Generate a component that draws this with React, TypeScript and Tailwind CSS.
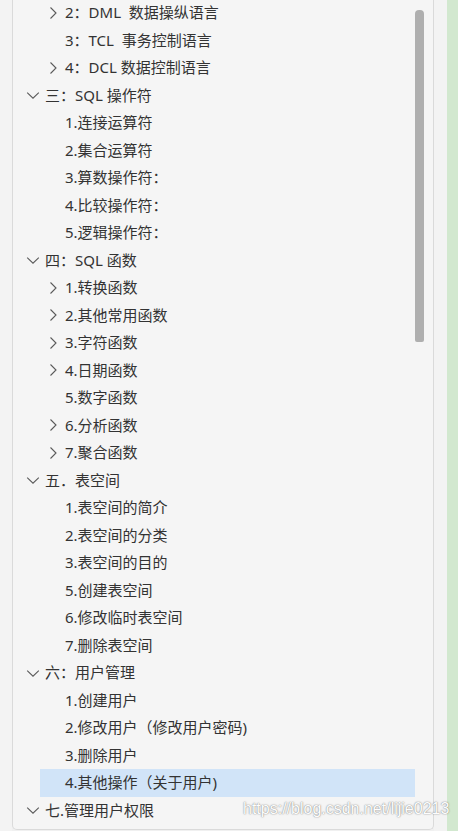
import React from "react";

type Row = { level: 0 | 1; text: string; chevron?: "right" | "down"; selected?: boolean };

const rows: Row[] = [
  { level: 1, text: "2：DML  数据操纵语言", chevron: "right" },
  { level: 1, text: "3：TCL  事务控制语言" },
  { level: 1, text: "4：DCL 数据控制语言", chevron: "right" },
  { level: 0, text: "三：SQL 操作符", chevron: "down" },
  { level: 1, text: "1.连接运算符" },
  { level: 1, text: "2.集合运算符" },
  { level: 1, text: "3.算数操作符：" },
  { level: 1, text: "4.比较操作符：" },
  { level: 1, text: "5.逻辑操作符：" },
  { level: 0, text: "四：SQL 函数", chevron: "down" },
  { level: 1, text: "1.转换函数", chevron: "right" },
  { level: 1, text: "2.其他常用函数", chevron: "right" },
  { level: 1, text: "3.字符函数", chevron: "right" },
  { level: 1, text: "4.日期函数", chevron: "right" },
  { level: 1, text: "5.数字函数" },
  { level: 1, text: "6.分析函数", chevron: "right" },
  { level: 1, text: "7.聚合函数", chevron: "right" },
  { level: 0, text: "五．表空间", chevron: "down" },
  { level: 1, text: "1.表空间的简介" },
  { level: 1, text: "2.表空间的分类" },
  { level: 1, text: "3.表空间的目的" },
  { level: 1, text: "5.创建表空间" },
  { level: 1, text: "6.修改临时表空间" },
  { level: 1, text: "7.删除表空间" },
  { level: 0, text: "六：用户管理", chevron: "down" },
  { level: 1, text: "1.创建用户" },
  { level: 1, text: "2.修改用户（修改用户密码)" },
  { level: 1, text: "3.删除用户" },
  { level: 1, text: "4.其他操作（关于用户)", selected: true },
  { level: 0, text: "七.管理用户权限", chevron: "down" },
];

const Chevron: React.FC<{ dir?: "right" | "down" }> = ({ dir }) => {
  if (!dir) return <span className="w-[16px] h-[16px]" />;
  return (
    <svg width="16" height="16" viewBox="0 0 16 16" fill="none" className="shrink-0">
      {dir === "right" ? (
        <path d="M5.5 2.5 L11 8 L5.5 13.5" stroke="#5a5a5a" strokeWidth="1.1" />
      ) : (
        <path d="M2.2 5.6 L8 11.2 L13.8 5.6" stroke="#5a5a5a" strokeWidth="1.1" />
      )}
    </svg>
  );
};

export default function App() {
  return (
    <div className="relative w-[458px] h-[831px] overflow-hidden bg-[#f0f0f0] flex font-['Noto_Sans','Noto_Sans_CJK_SC',sans-serif]">
      {/* left gutter */}
      <div className="w-[12px] h-full bg-[#f3f3f3]" />

      {/* outline panel */}
      <div className="w-[422px] h-[830px] flex bg-[#f5f5f5] border-l border-r border-b border-[#dadada] rounded-b-[5px]">
        <div className="w-[402px] -mt-[1px] flex flex-col">
          {rows.map((r, i) => (
            <div
              key={i}
              className={`h-[27.5px] shrink-0 flex items-center ${
                r.level === 0 ? "pl-[11.5px]" : "ml-[27px] pl-[4.5px]"
              } ${r.selected ? "bg-[#d1e4f8]" : ""}`}
            >
              <Chevron dir={r.chevron} />
              <span className="ml-[4.5px] whitespace-pre text-[15px] leading-none text-[#333333]">
                {r.text}
              </span>
            </div>
          ))}
        </div>
        {/* scrollbar */}
        <div className="w-[18px] h-full pt-[10px]">
          <div className="w-[9px] h-[332px] bg-[#afafaf] rounded-t-[4px] rounded-b-[2px]" />
        </div>
      </div>

      <div className="w-[13px] h-full bg-[#f3f3f3]" />
      <div className="w-[11px] h-full bg-[#d2e8cf]" />

      {/* watermark */}
      <div className="absolute left-[243px] top-[801px] text-[16px] leading-none font-['Liberation_Sans',Arial,sans-serif] text-[#fdfdfd] [text-shadow:0_0_1px_rgba(60,60,60,0.6),0_0_2px_rgba(60,60,60,0.35)]">
        https://blog.csdn.net/lijie0213
      </div>
    </div>
  );
}
